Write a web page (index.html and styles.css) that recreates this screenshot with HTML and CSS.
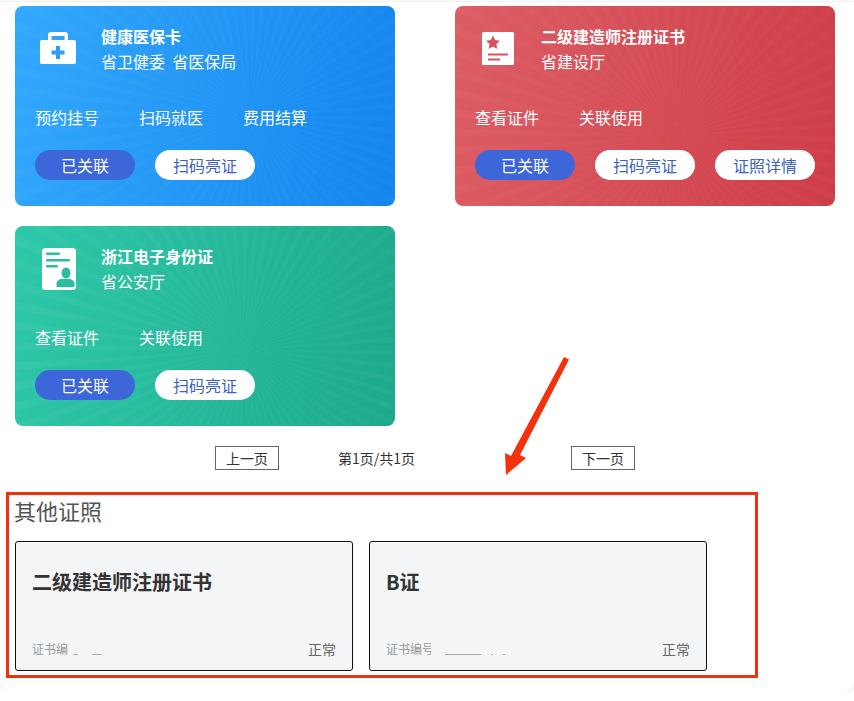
FILE: index.html
```html
<!DOCTYPE html>
<html lang="zh-CN">
<head>
  <meta charset="UTF-8" />
  <meta name="viewport" content="width=device-width, initial-scale=1.0"/>
  <title>我的证照</title>
  <link rel="stylesheet" href="styles.css">
</head>
<body>

  <div class="panel">
    <div class="cards">

      <div class="card card-blue">
        <div class="card-head">
          <svg class="card-icon" viewBox="0 0 46 50">
            <path fill="#fff" fill-rule="evenodd" d="M13 16v-5a3 3 0 0 1 3-3h14a3 3 0 0 1 3 3v5h6a2 2 0 0 1 2 2v20a2 2 0 0 1-2 2H7a2 2 0 0 1-2-2V18a2 2 0 0 1 2-2zM16.500 12v4h13v-4z"/>
            <path fill="#2f9df5" d="M21 22h4v4.500h4.500v4H25V35h-4v-4.500h-4.500v-4H21z"/>
          </svg>
          <div class="card-info">
            <div class="card-title">健康医保卡</div>
            <div class="card-org">省卫健委&nbsp;&nbsp;省医保局</div>
          </div>
        </div>
        <div class="card-links">
          <a href="#">预约挂号</a>
          <a href="#">扫码就医</a>
          <a href="#">费用结算</a>
        </div>
        <div class="card-actions">
          <button class="pill pill-blue">已关联</button>
          <button class="pill">扫码亮证</button>
        </div>
      </div>

      <div class="card card-red">
        <div class="card-head">
          <svg class="card-icon" viewBox="0 0 46 50">
            <rect x="7" y="8" width="32" height="33" rx="1.500" fill="#fff"/>
            <path fill="#d9525b" d="M18 11.500l2.100 4.600 4.900.6-3.600 3.400.9 5-4.300-2.500-4.300 2.500.9-5-3.600-3.400 4.900-.6z"/>
            <rect x="13" y="29.500" width="20" height="2" fill="#d9525b"/>
            <rect x="13" y="34.500" width="12" height="2" fill="#d9525b"/>
          </svg>
          <div class="card-info">
            <div class="card-title">二级建造师注册证书</div>
            <div class="card-org">省建设厅</div>
          </div>
        </div>
        <div class="card-links">
          <a href="#">查看证件</a>
          <a href="#">关联使用</a>
        </div>
        <div class="card-actions">
          <button class="pill pill-blue">已关联</button>
          <button class="pill">扫码亮证</button>
          <button class="pill">证照详情</button>
        </div>
      </div>

      <div class="card card-green">
        <div class="card-head">
          <svg class="card-icon" viewBox="0 0 46 50">
            <rect x="7" y="4" width="34" height="42" rx="3.500" fill="#fff"/>
            <g fill="#2bbd9f">
              <rect x="11" y="8.500" width="14" height="2.500" rx="1"/>
              <rect x="11" y="15" width="24" height="2.500" rx="1"/>
              <rect x="11" y="21" width="12" height="2.500" rx="1"/>
              <ellipse cx="31" cy="29" rx="4.500" ry="5.500"/>
              <path d="M22 43v-3.500c0-2.500 3-4.500 5.500-4.500h7c2.500 0 5.500 2 5.500 4.500V43z" transform="translate(-.500)"/>
            </g>
          </svg>
          <div class="card-info">
            <div class="card-title">浙江电子身份证</div>
            <div class="card-org">省公安厅</div>
          </div>
        </div>
        <div class="card-links">
          <a href="#">查看证件</a>
          <a href="#">关联使用</a>
        </div>
        <div class="card-actions">
          <button class="pill pill-blue">已关联</button>
          <button class="pill">扫码亮证</button>
        </div>
      </div>

    </div>

    <div class="pager">
      <button class="pager-btn">上一页</button>
      <span class="pager-info">第1页/共1页</span>
      <button class="pager-btn">下一页</button>
    </div>

    <div class="other">
      <h2>其他证照</h2>
      <div class="other-list">
        <div class="other-card">
          <div class="other-title">二级建造师注册证书</div>
          <div class="other-foot">
            <span class="other-no">
              <span class="no-label">证书编</span>
              <i class="smudge smudge-a"></i>
              <i class="smudge smudge-b"></i>
            </span>
            <span class="other-state">正常</span>
          </div>
        </div>
        <div class="other-card">
          <div class="other-title">B证</div>
          <div class="other-foot">
            <span class="other-no">
              <span class="no-label no-clip">证书编号</span>
              <i class="smudge smudge-c"></i>
              <i class="smudge smudge-d"></i>
              <i class="smudge smudge-d"></i>
            </span>
            <span class="other-state">正常</span>
          </div>
        </div>
      </div>
    </div>

    <!-- annotation drawn over the page -->
    <div class="mark-box"></div>
    <svg class="mark-arrow" viewBox="0 0 75 125">
      <path fill="#f5310c" d="M64 7l5 2.500-49 95.500 6 3-20 17-1-22 6 3z"/>
    </svg>
  </div>

</body>
</html>
```

FILE: styles.css
```css
* {
  box-sizing: border-box;
}

body {
  margin: 0;
  padding: 0;
  background-color: #fff;
  font-family: "Noto Sans CJK SC", "Liberation Sans", sans-serif;
  font-size: 16px;
}

.panel {
  position: relative;
  height: 690px;
  margin-top: 1px;
  padding: 4px 15px 0;
  background-color: #fff;
  border-top: 1px solid #f0f0f0;
  border-radius: 0 0 10px 10px;
  box-shadow: 0 2px 6px rgba(0, 0, 0, 0.08);
}

.cards {
  display: grid;
  grid-template-columns: 380px 380px;
  gap: 20px 60px;
}

.card {
  height: 200px;
  padding: 18px 20px;
  border-radius: 8px;
  color: #fff;
}

.card-blue {
  background:
    repeating-conic-gradient(from 0deg at 62% 55%, rgba(255, 255, 255, 0.025) 0 2deg, rgba(255, 255, 255, 0) 2deg 5deg),
    linear-gradient(100deg, #31a8fc, #1385ee);
}

.card-red {
  background:
    repeating-conic-gradient(from 0deg at 58% 65%, rgba(255, 255, 255, 0.025) 0 2deg, rgba(255, 255, 255, 0) 2deg 5deg),
    linear-gradient(100deg, #dd5d65, #ce3d47);
}

.card-green {
  background:
    repeating-conic-gradient(from 0deg at 60% 62%, rgba(255, 255, 255, 0.03) 0 2deg, rgba(255, 255, 255, 0) 2deg 5deg),
    linear-gradient(100deg, #2fc8aa, #1ca98b);
}

.card-head {
  display: flex;
  gap: 20px;
  height: 50px;
}

.card-icon {
  width: 46px;
  height: 50px;
  flex-shrink: 0;
}

.card-title {
  font-weight: bold;
  line-height: 25px;
}

.card-org {
  line-height: 25px;
}

.card-links {
  display: flex;
  gap: 40px;
  margin-top: 31px;
  line-height: 24px;
}

.card-links a {
  color: #fff;
  text-decoration: none;
}

.card-actions {
  display: flex;
  gap: 20px;
  margin-top: 21px;
}

.pill {
  width: 100px;
  height: 30px;
  padding: 0;
  border: none;
  border-radius: 15px;
  background-color: #fff;
  color: #3c62c4;
  font-family: inherit;
  font-size: 16px;
  line-height: 30px;
  cursor: pointer;
}

.pill-blue {
  background-color: #3d67d8;
  color: #fff;
}

.pager {
  display: flex;
  margin: 20px 0 0 200px;
}

.pager-btn {
  width: 64px;
  height: 24px;
  padding: 0;
  border: 1px solid #666;
  background-color: #fff;
  color: #333;
  font-family: inherit;
  font-size: 14px;
  line-height: 22px;
  cursor: pointer;
}

.pager-info {
  width: 292px;
  padding-left: 59px;
  color: #333;
  font-size: 14px;
  line-height: 24px;
}

.other h2 {
  margin: 24px 0 0 -1px;
  color: #555;
  font-size: 22px;
  font-weight: normal;
  line-height: 32px;
}

.other-list {
  display: flex;
  gap: 16px;
  margin-top: 15px;
}

.other-card {
  display: flex;
  flex-direction: column;
  justify-content: space-between;
  width: 338px;
  height: 130px;
  padding: 26px 16px 11px;
  border: 1px solid #111;
  border-radius: 3px;
  background-color: #f4f5f7;
}

.other-title {
  color: #333;
  font-size: 20px;
  font-weight: bold;
  line-height: 28px;
}

.other-foot {
  display: flex;
  justify-content: space-between;
  align-items: center;
  line-height: 20px;
}

.other-no {
  display: flex;
  align-items: center;
  color: #999;
  font-size: 12px;
}

.no-clip {
  width: 45px;
  overflow: hidden;
  white-space: nowrap;
}

.smudge {
  display: block;
  height: 1px;
  margin-top: 10px;
  background-color: #aaa;
}

.smudge-a {
  width: 5px;
  margin-left: 5px;
}

.smudge-b {
  width: 10px;
  margin-left: 14px;
}

.smudge-c {
  width: 36px;
  margin-left: 14px;
}

.smudge-d {
  width: 2px;
  margin-left: 10px;
}

.other-state {
  color: #666;
  font-size: 14px;
}

.mark-box {
  position: absolute;
  left: 6px;
  top: 490px;
  width: 752px;
  height: 186px;
  border: 3px solid #f0310f;
  pointer-events: none;
}

.mark-arrow {
  position: absolute;
  left: 500px;
  top: 348px;
  width: 75px;
  height: 125px;
}
```
